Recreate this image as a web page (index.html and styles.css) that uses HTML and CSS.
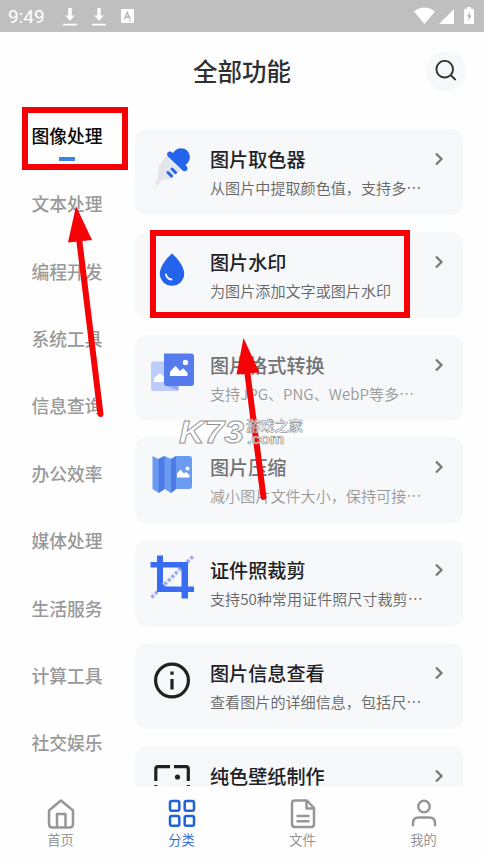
FILE: index.html
```html
<!DOCTYPE html>
<html lang="zh-CN">
<head>
<meta charset="utf-8">
<meta name="viewport" content="width=device-width, initial-scale=1">
<title>全部功能</title>
<link rel="stylesheet" href="styles.css">
</head>
<body>
<div class="screen">
  <header class="status">
    <span class="clock">9:49</span>
    <svg class="dl" width="14" height="18" viewBox="0 0 14 18"><path d="M5.3 0h3.4v7.5h3L7 13 2.3 7.5h3zM0 15.8h14v1.7H0z" fill="#fff"/></svg>
    <svg class="dl" width="14" height="18" viewBox="0 0 14 18"><path d="M5.3 0h3.4v7.5h3L7 13 2.3 7.5h3zM0 15.8h14v1.7H0z" fill="#fff"/></svg>
    <svg class="keyboard" width="13" height="14" viewBox="0 0 13 14"><rect width="13" height="14" rx="1" fill="#fff"/><path d="M3.3 10.2 6.3 3.5l3 6.7M4.5 8h3.8" fill="none" stroke="#b5b5b5" stroke-width="1.5"/><path d="M7.5 12h3.2" stroke="#c9c9c9"/></svg>
    <span class="grow"></span>
    <svg class="signals" width="61" height="18" viewBox="0 0 61 18"><path d="M0 4.5Q10.500-3.500 21 4.500L10.500 17zM25 17 40 2v15z" fill="#fff"/><path d="M50 3.200q0-1.500 1.500-1.500h1.500V0h4v1.700h1.500q1.500 0 1.500 1.500V17H50z" fill="#fff"/><path d="m56 4.500-3 5h2L54.200 14l3.200-5.600h-2z" fill="#aaa"/></svg>
  </header>

  <div class="titlebar">
    <h1>全部功能</h1>
    <button class="search" aria-label="搜索"><svg width="22" height="22" viewBox="0 0 22 22" fill="none" stroke="#333" stroke-width="1.9"><circle cx="9.700" cy="9.200" r="8.300"/><path d="m15.300 14.800 5.400 5.200"/></svg></button>
  </div>

  <main class="content">
    <nav class="side">
      <a class="active">图像处理</a>
      <a>文本处理</a>
      <a>编程开发</a>
      <a>系统工具</a>
      <a>信息查询</a>
      <a>办公效率</a>
      <a>媒体处理</a>
      <a>生活服务</a>
      <a>计算工具</a>
      <a>社交娱乐</a>
    </nav>

    <section class="cards">
      <article class="card">
        <svg class="icon" viewBox="0 0 46 46"><path d="m17.500 12.500 14 14.500-8.500 8.500-9.800 1.500L8.500 42q-2.500.5-2-2.500l2.200-4.200 1.500-12.500z" fill="#e2e5ec"/><path d="M18.500 9.800c2-2.700 4.300-.8 5.500.3 3-5.500 10-6.300 14-2.700 4.500 4.500 3.500 11-1.500 14.500 2 2 3 3.800 1 5.600-1.800 1.500-3.600.5-5-.9L19 13.500c-1-1-1.400-2.500-.5-3.700z" fill="#2463eb"/><path d="m19 29.500 3.500 3.500M23 26l3.500 3.500" stroke="#2463eb" stroke-width="3" stroke-linecap="round"/></svg>
        <div class="text"><h2>图片取色器</h2><p>从图片中提取颜色值，支持多…</p></div>
        <svg class="chev" viewBox="0 0 10 14"><path d="m2 1.500 5.500 5.500L2 12.500"/></svg>
      </article>
      <article class="card">
        <svg class="icon" viewBox="0 0 46 46"><path d="M23 7.500C20 10 10.800 19.500 10.800 27.500a12.200 12.200 0 0 0 24.400 0C35.200 19.500 26 10 23 7.500z" fill="#2463eb"/><path d="M17 28.500q1 4.500 5.500 5" fill="none" stroke="#fff" stroke-width="1.900" stroke-linecap="round"/></svg>
        <div class="text"><h2>图片水印</h2><p>为图片添加文字或图片水印</p></div>
        <svg class="chev" viewBox="0 0 10 14"><path d="m2 1.500 5.500 5.500L2 12.500"/></svg>
      </article>
      <article class="card faded">
        <svg class="icon" viewBox="0 0 46 46"><rect x="2" y="12.500" width="28" height="29.500" rx="2.500" fill="#bccbfa"/><path d="M5 33v-4l6-5 6 6v3z" fill="#fff"/><path d="M15 36h14v5.500z" fill="#91a7ed"/><path d="M15 4.500h27q3 0 3 3v26.500q0 3-3 3H18q-3 0-3-3z" fill="#557bed"/><path d="M21 27v-4.300l5.500-6 4.500 5.300 3.200-2.800 4.300 4.500V27z" fill="#fff"/><circle cx="36.500" cy="13.500" r="2.700" fill="#fff"/></svg>
        <div class="text"><h2>图片格式转换</h2><p>支持JPG、PNG、WebP等多…</p></div>
        <svg class="chev" viewBox="0 0 10 14"><path d="m2 1.500 5.500 5.500L2 12.500"/></svg>
      </article>
      <article class="card faded">
        <svg class="icon" viewBox="0 0 46 46"><path d="m3.500 5 6 3 6-3 7 3 4.500-3h13q3 0 3 3v27q0 3-3 3H27l-5 4-6.500-4-5.500 4-6.500-4z" fill="#6b9bf1"/><path d="m9.500 8 6-3v33l-6 4zM22 8l5-3v33l-5 4z" fill="#4d7ae7"/><path d="M28 26.500v-4l3.500-4 3.500 4 2-1.500 3.500 3v2.500z" fill="#fff"/><circle cx="38.500" cy="17.500" r="2" fill="#fff"/></svg>
        <div class="text"><h2>图片压缩</h2><p>减小图片文件大小，保持可接…</p></div>
        <svg class="chev" viewBox="0 0 10 14"><path d="m2 1.500 5.500 5.500L2 12.500"/></svg>
      </article>
      <article class="card">
        <svg class="icon" viewBox="0 0 46 46"><path d="M2.500 43.500 44 2.500" stroke="#9ca9ec" stroke-width="3.500" stroke-dasharray="3.200 1.800"/><path d="M8 1.500h6V8h25v24.500h6v5.500h-6v6.500h-6.500V38H8V13.500H1.500V8H8zM14 13.500v14l4 5h14.500V18L28 13.500z" fill="#396cf2" fill-rule="evenodd"/><path d="m15 31 16-16" stroke="#f7f8fa" stroke-width="5"/><path d="m15.500 30.500 16-16" stroke="#9ca9ec" stroke-width="3.500" stroke-dasharray="3.200 1.800"/></svg>
        <div class="text"><h2>证件照裁剪</h2><p>支持50种常用证件照尺寸裁剪…</p></div>
        <svg class="chev" viewBox="0 0 10 14"><path d="m2 1.500 5.500 5.500L2 12.500"/></svg>
      </article>
      <article class="card">
        <svg class="icon" viewBox="0 0 46 46"><circle cx="23" cy="23.500" r="16.400" fill="none" stroke="#202124" stroke-width="3.200"/><path d="M23 22V32.500M23 14.500v3.300" stroke="#202124" stroke-width="3.200"/></svg>
        <div class="text"><h2>图片信息查看</h2><p>查看图片的详细信息，包括尺…</p></div>
        <svg class="chev" viewBox="0 0 10 14"><path d="m2 1.500 5.500 5.500L2 12.500"/></svg>
      </article>
      <article class="card">
        <svg class="icon" viewBox="0 0 46 46"><path d="M6.800 21V9q0-2.300 2.300-2.300H21M25 6.700h12q2.300 0 2.300 2.300v12M6.800 25v12q0 2.300 2.300 2.300H21M25 39.300h12q2.300 0 2.300-2.300V25M11 37l8-9 5 5 5-5 7 9" fill="none" stroke="#202124" stroke-width="3.200"/><circle cx="28.500" cy="17" r="2.600" fill="#202124"/></svg>
        <div class="text"><h2>纯色壁纸制作</h2></div>
        <svg class="chev" viewBox="0 0 10 14"><path d="m2 1.500 5.500 5.500L2 12.500"/></svg>
      </article>
    </section>
  </main>

  <nav class="tabs">
    <a><svg viewBox="0 0 30 32"><path d="M3 12.500 15 2.500l12 10V26q0 3.500-3.500 3.500h-17Q3 29.500 3 26zM11 29.500V16h8.500v13.500"/></svg>首页</a>
    <a class="current"><svg viewBox="0 0 30 32"><rect x="3" y="3" width="9.300" height="9.700" rx="1.800"/><rect x="17.700" y="3" width="9.300" height="9.700" rx="1.800"/><rect x="3" y="18" width="9.300" height="9.700" rx="1.800"/><rect x="17.700" y="18" width="9.300" height="9.700" rx="1.800"/></svg>分类</a>
    <a><svg viewBox="0 0 30 32"><path d="M6.500 2.500H19l7 7.500v16q0 3-3 3H7q-3 0-3-3V5.500q0-3 2.500-3zM18.500 3v7.500H26M8.500 18h13M8.500 23.300h13"/></svg>文件</a>
    <a><svg viewBox="0 0 30 32"><circle cx="15" cy="8.500" r="5.700"/><path d="M4 28.300V25q0-5.500 5.500-5.500h11q5.500 0 5.500 5.500v3.300"/></svg>我的</a>
  </nav>

  <svg class="marks" width="484" height="862" viewBox="0 0 484 862">
    <g fill="none" stroke="#f40206" stroke-width="6">
      <rect x="25" y="110" width="100" height="57"/>
      <rect x="153" y="233" width="254" height="82"/>
      <path d="M79 238 100.500 414M247 370 263.500 497" stroke-linecap="round"/>
    </g>
    <path d="m76 206 16 34-24 2.500zM243.500 338l16 34.500-23 2z" fill="#f40206"/>
    <g fill="#fff" fill-opacity=".7" stroke="#929292">
      <text class="wm-logo" x="179" y="443" textLength="65" lengthAdjust="spacingAndGlyphs">K73</text>
      <text class="wm-cn" x="246" y="431" textLength="57" lengthAdjust="spacingAndGlyphs">游戏之家</text>
      <text class="wm-com" x="247" y="443.500" textLength="37" lengthAdjust="spacingAndGlyphs">.com</text>
    </g>
  </svg>
</div>
</body>
</html>
```

FILE: styles.css
```css
* { box-sizing: border-box; margin: 0; padding: 0; }
body { background: #fff; font-family: "Noto Sans CJK SC", sans-serif; overflow: hidden; }
.screen { position: relative; display: flex; flex-direction: column; width: 484px; height: 862px; overflow: hidden; background: #fefefe; }

.status { display: flex; flex: none; height: 32px; padding: 0 9px 0 8px; background: #bfbfbf; color: #fff; }
.clock { width: 54.500px; font: 400 19px/34px Roboto, sans-serif; }
.dl { margin: 8px 15px 0 0; }
.keyboard { margin-top: 9px; }
.grow { flex: 1; }
.signals { margin-top: 7px; }

.titlebar { display: grid; grid-template-columns: 60px 1fr 60px; flex: none; align-items: center; height: 78px; }
.titlebar h1 { grid-column: 2; color: #2f3033; font-size: 24.500px; font-weight: 500; line-height: 36px; text-align: center; }
.search { display: flex; align-items: center; justify-content: center; width: 40px; height: 40px; margin-left: 1.500px; border: 0; border-radius: 50%; background: #f7f8fa; }

.content { display: flex; flex: 1; min-height: 0; overflow: hidden; }
.side { flex: none; width: 135px; }
.side a { display: flex; align-items: center; height: 67.400px; padding-left: 31.500px; color: #999; font-size: 17.800px; font-weight: 500; line-height: 26px; }
.side .active { flex-direction: column; align-items: flex-start; height: 59.500px; padding-top: 11.500px; color: #090909; }
.side .active::after { content: ""; width: 16px; height: 4px; margin: 9.500px 0 0 27.500px; background: #3e82e6; }

.cards { display: flex; flex-direction: column; gap: 16.800px; width: 328px; padding-top: 19px; }
.card { display: flex; flex: none; height: 86px; padding: 14px 19.500px 0 14px; border-radius: 12px; background: #f7f8fa; }
.icon { flex: none; width: 46px; height: 46px; }
.text { flex: 1; min-width: 0; margin-left: 15px; white-space: nowrap; }
.text h2 { color: #202124; font-size: 19.100px; font-weight: 500; line-height: 32px; }
.text p { margin-top: -1px; color: #666; font-size: 15.100px; font-weight: 350; line-height: 26px; }
.chev { flex: none; width: 10px; height: 14px; margin-top: 9px; fill: none; stroke: #777; stroke-width: 2.200; }
.faded h2 { color: #727375; }
.faded p { color: #999; }

.tabs { display: grid; grid-template-columns: repeat(4, 1fr); flex: none; height: 76px; padding-top: 12px; background: #fefefe; }
.tabs a { display: flex; flex-direction: column; align-items: center; color: #8c8c8c; font-size: 13.300px; font-weight: 350; line-height: 20px; }
.tabs svg { width: 30px; height: 32px; fill: none; stroke: #969696; stroke-width: 2.500; stroke-linejoin: round; }
.tabs .current { color: #1f62d8; }
.tabs .current svg { stroke: #1f62d8; }

.marks { position: absolute; top: 0; left: 0; pointer-events: none; }
.wm-logo { font: italic 700 32px "Liberation Sans", sans-serif; stroke-width: .9; }
.wm-cn { font: 700 14px "Noto Sans CJK SC", sans-serif; stroke-width: .6; }
.wm-com { font: 700 14px "Liberation Sans", sans-serif; stroke-width: .7; }
```
